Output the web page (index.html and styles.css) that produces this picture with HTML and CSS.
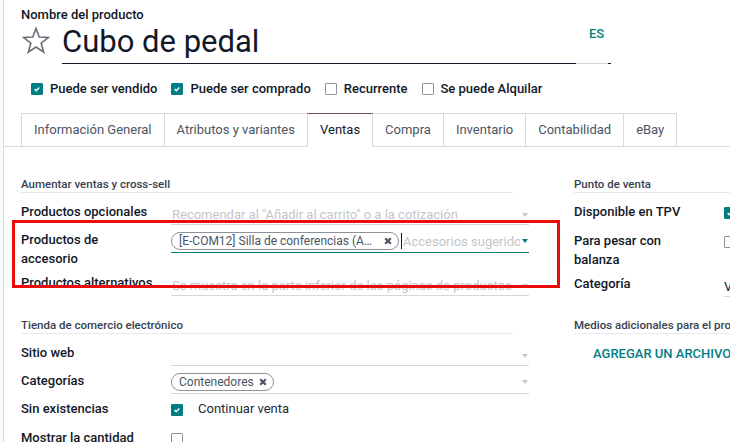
FILE: index.html
```html
<!DOCTYPE html>
<html>
  <head>
    <meta http-equiv="Content-Type" content="text/html; charset=UTF-8">
    <title>Cubo de pedal</title>
    <link rel="stylesheet" href="styles.css">
  </head>

  <body>
    <div class="hoja">

      <label class="nombre_label">Nombre del producto</label>
      <div class="nombre_fila">
        <svg class="estrella" viewBox="0 0 28 27">
          <polygon points="14,1.5 17.2,10 26.4,10.5 19.2,16.2 21.6,25 14,20 6.4,25 8.8,16.2 1.6,10.5 10.8,10" />
        </svg>
        <div class="nombre_input">Cubo de pedal</div>
        <div class="idioma">ES</div>
        <div class="idioma_fin"></div>
      </div>

      <div class="opciones">
        <span class="opcion">
          <span class="check marcado"><svg viewBox="0 0 12 12"><path d="M3.2 6.1 5.1 8 8.8 4.2" /></svg></span>
          Puede ser vendido
        </span>
        <span class="opcion">
          <span class="check marcado"><svg viewBox="0 0 12 12"><path d="M3.2 6.1 5.1 8 8.8 4.2" /></svg></span>
          Puede ser comprado
        </span>
        <span class="opcion"><span class="check"></span>Recurrente</span>
        <span class="opcion"><span class="check"></span>Se puede Alquilar</span>
      </div>

      <ul class="pestanas">
        <li>Información General</li>
        <li>Atributos y variantes</li>
        <li class="activa">Ventas</li>
        <li>Compra</li>
        <li>Inventario</li>
        <li>Contabilidad</li>
        <li>eBay</li>
      </ul>

      <!-- ventas / punto de venta -->
      <div class="grupos primero">
        <div class="grupo izq">
          <div class="separador">Aumentar ventas y cross-sell</div>

          <div class="fila">
            <div class="etiqueta">Productos opcionales</div>
            <div class="campo">
              <span class="placeholder">Recomendar al "Añadir al carrito" o a la cotización</span>
              <span class="flecha"></span>
            </div>
          </div>

          <div class="fila" id="fila_accesorio">
            <div class="etiqueta">Productos de<br>accesorio</div>
            <div class="campo etiquetas enfocado">
              <span class="tag">
                <span class="tag_texto corto">[E-COM12] Silla de conferencias (Aluminio)</span>
                <svg class="quitar" viewBox="0 0 8 8"><path d="M1.2 1.2 6.8 6.8 M6.8 1.2 1.2 6.8" /></svg>
              </span>
              <span class="cursor"></span>
              <span class="placeholder relleno">Accesorios sugeridos</span>
              <span class="flecha"></span>
            </div>
            <div class="resaltado"></div>
          </div>

          <div class="fila">
            <div class="etiqueta">Productos alternativos</div>
            <div class="campo">
              <span class="placeholder">Se muestra en la parte inferior de las páginas de productos</span>
              <span class="flecha"></span>
            </div>
          </div>
        </div>

        <div class="grupo der">
          <div class="separador">Punto de venta</div>

          <div class="fila">
            <div class="etiqueta">Disponible en TPV</div>
            <div class="campo sin_borde">
              <span class="check marcado"><svg viewBox="0 0 12 12"><path d="M3.2 6.1 5.1 8 8.8 4.2" /></svg></span>
            </div>
          </div>

          <div class="fila">
            <div class="etiqueta">Para pesar con<br>balanza</div>
            <div class="campo sin_borde">
              <span class="check"></span>
            </div>
          </div>

          <div class="fila">
            <div class="etiqueta">Categoría</div>
            <div class="campo valor">Varios</div>
          </div>
        </div>
      </div>

      <!-- tienda online / medios -->
      <div class="grupos segundo">
        <div class="grupo izq">
          <div class="separador">Tienda de comercio electrónico</div>

          <div class="fila">
            <div class="etiqueta">Sitio web</div>
            <div class="campo">
              <span class="flecha"></span>
            </div>
          </div>

          <div class="fila">
            <div class="etiqueta">Categorías</div>
            <div class="campo etiquetas">
              <span class="tag">
                <span class="tag_texto">Contenedores</span>
                <svg class="quitar" viewBox="0 0 8 8"><path d="M1.2 1.2 6.8 6.8 M6.8 1.2 1.2 6.8" /></svg>
              </span>
              <span class="flecha"></span>
            </div>
          </div>

          <div class="fila">
            <div class="etiqueta">Sin existencias</div>
            <div class="campo sin_borde">
              <span class="check marcado"><svg viewBox="0 0 12 12"><path d="M3.2 6.1 5.1 8 8.8 4.2" /></svg></span>
              <span class="check_texto">Continuar venta</span>
            </div>
          </div>

          <div class="fila">
            <div class="etiqueta">Mostrar la cantidad</div>
            <div class="campo sin_borde">
              <span class="check"></span>
            </div>
          </div>
        </div>

        <div class="grupo der">
          <div class="separador">Medios adicionales para el producto</div>
          <div class="boton_archivo">Agregar un archivo</div>
        </div>
      </div>

    </div>
  </body>
</html>
```

FILE: styles.css
```css
html, body {
  margin: 0;
  height: 100%;
  overflow: hidden;
}

body {
  background: #f9fafb;
  font-family: Roboto, "Noto Sans", sans-serif;
  font-size: 13px;
  color: #111827;
}

.hoja {
  margin-left: 3px;
  border-left: 1px solid #d8dadd;
  background: #fff;
  height: 100%;
  width: 900px;
  padding: 5px 0 0 17px;
  box-sizing: border-box;
}

/* cabecera */

.nombre_label {
  display: block;
  font-weight: 500;
  line-height: 19px;
}

.nombre_fila {
  display: flex;
}

.estrella {
  flex: none;
  width: 28px;
  height: 27px;
  margin: 3px 12px 0 1px;
}

.estrella polygon {
  fill: none;
  stroke: #6c737d;
  stroke-width: 1.7;
  stroke-linejoin: miter;
}

.nombre_input {
  width: 514px;
  font-size: 31px;
  line-height: 36px;
  padding-bottom: 3px;
  border-bottom: 1px solid #111827;
}

.idioma {
  width: 19px;
  padding-left: 13px;
  line-height: 19px;
  font-weight: 500;
  color: #017e84;
  border-bottom: 1px solid #d1d5db;
}

.idioma_fin {
  width: 3px;
  border-bottom: 1px solid #111827;
}

/* casillas */

.opciones {
  display: flex;
  gap: 14px;
  margin: 15px 0;
  padding-left: 10px;
  line-height: 19px;
  font-weight: 500;
}

.opcion {
  display: flex;
  align-items: center;
  gap: 7px;
}

.check {
  flex: none;
  display: inline-block;
  width: 12px;
  height: 12px;
  box-sizing: border-box;
  border: 1px solid #8f949a;
  border-radius: 1px;
  background: #fff;
}

.check.marcado {
  background: #017e84;
  border-color: #017e84;
}

.check svg {
  display: block;
  width: 10px;
  height: 10px;
}

.check svg path {
  fill: none;
  stroke: #fff;
  stroke-width: 1.7;
}

/* pestañas */

.pestanas {
  display: flex;
  list-style: none;
  margin: 0 0 0 -17px;
  padding: 0 0 0 17px;
  border-bottom: 1px solid #d8dadd;
}

.pestanas li {
  border: 1px solid #d8dadd;
  border-bottom: none;
  margin-right: -1px;
  padding: 6px 12px;
  line-height: 20px;
  color: #4b5563;
  background: #fff;
}

.pestanas li.activa {
  border-top-color: #714b67;
  color: #111827;
  padding-bottom: 7px;
  margin-bottom: -1px;
  position: relative;
}

/* grupos */

.grupos {
  display: flex;
}

.grupos.primero {
  margin-top: 29px;
}

.grupos.segundo {
  margin-top: 15px;
}

.grupo.izq {
  width: 508px;
  flex: none;
}

.grupo.der {
  width: 330px;
  flex: none;
  margin-left: 45px;
}

.separador {
  font-size: 11.5px;
  font-weight: 500;
  line-height: 16px;
  color: #374151;
  border-bottom: 1px solid #e7e9ed;
  margin-bottom: 9px;
}

.izq .separador {
  margin-right: 16px;
}

.fila {
  display: flex;
  align-items: flex-start;
  margin-bottom: 5px;
}

.etiqueta {
  flex: none;
  width: 150px;
  font-weight: 500;
  line-height: 19px;
}

.campo {
  flex: 1;
  min-width: 0;
  display: flex;
  align-items: center;
  height: 19px;
  padding: 3px 0 0 1px;
  line-height: 19px;
  border-bottom: 1px solid #d4d7db;
  white-space: nowrap;
}

.campo.enfocado {
  border-bottom-color: #017e84;
}

.campo.etiquetas {
  height: 18px;
  padding: 2px 0;
}

.campo.sin_borde {
  height: 19px;
  padding: 0 0 4px 0;
  border-bottom-color: transparent;
}

.campo.sin_borde .check {
  margin-top: 3px;
}

.campo.valor {
  padding-left: 0;
}

.check_texto {
  margin-left: 15px;
  color: #1f2937;
}

.placeholder {
  color: #c2c6cb;
  overflow: hidden;
}

.placeholder.relleno {
  flex: 1;
  margin-left: 1px;
}

.flecha {
  flex: none;
  width: 0;
  height: 0;
  margin: 0 1px 0 auto;
  border-left: 3.5px solid transparent;
  border-right: 3.5px solid transparent;
  border-top: 4px solid #c5c9ce;
}

.enfocado .flecha {
  margin-left: 2px;
  border-top-color: #017e84;
}

.tag {
  flex: none;
  display: inline-flex;
  align-items: center;
  height: 18px;
  box-sizing: border-box;
  padding: 0 6px 0 7px;
  border: 1px solid #8d9298;
  border-radius: 9px;
  font-size: 12px;
  color: #4b5563;
  line-height: 16px;
}

.tag_texto.corto {
  max-width: 194px;
  overflow: hidden;
  text-overflow: ellipsis;
}

.quitar {
  width: 8px;
  height: 8px;
  margin-left: 5px;
}

.corto + .quitar {
  margin-left: 11px;
}

.quitar path {
  stroke: #4b5563;
  stroke-width: 2.2;
}

.cursor {
  flex: none;
  width: 1px;
  height: 16px;
  margin-left: 2px;
  background: #111827;
}

#fila_accesorio {
  position: relative;
}

.resaltado {
  position: absolute;
  z-index: 2;
  left: -9px;
  top: -10px;
  width: 542px;
  height: 62px;
  border: 3px solid #ea0b0b;
}

.boton_archivo {
  margin: 10px 0 0 19px;
  line-height: 19px;
  font-weight: 500;
  color: #017e84;
  text-transform: uppercase;
}
```
